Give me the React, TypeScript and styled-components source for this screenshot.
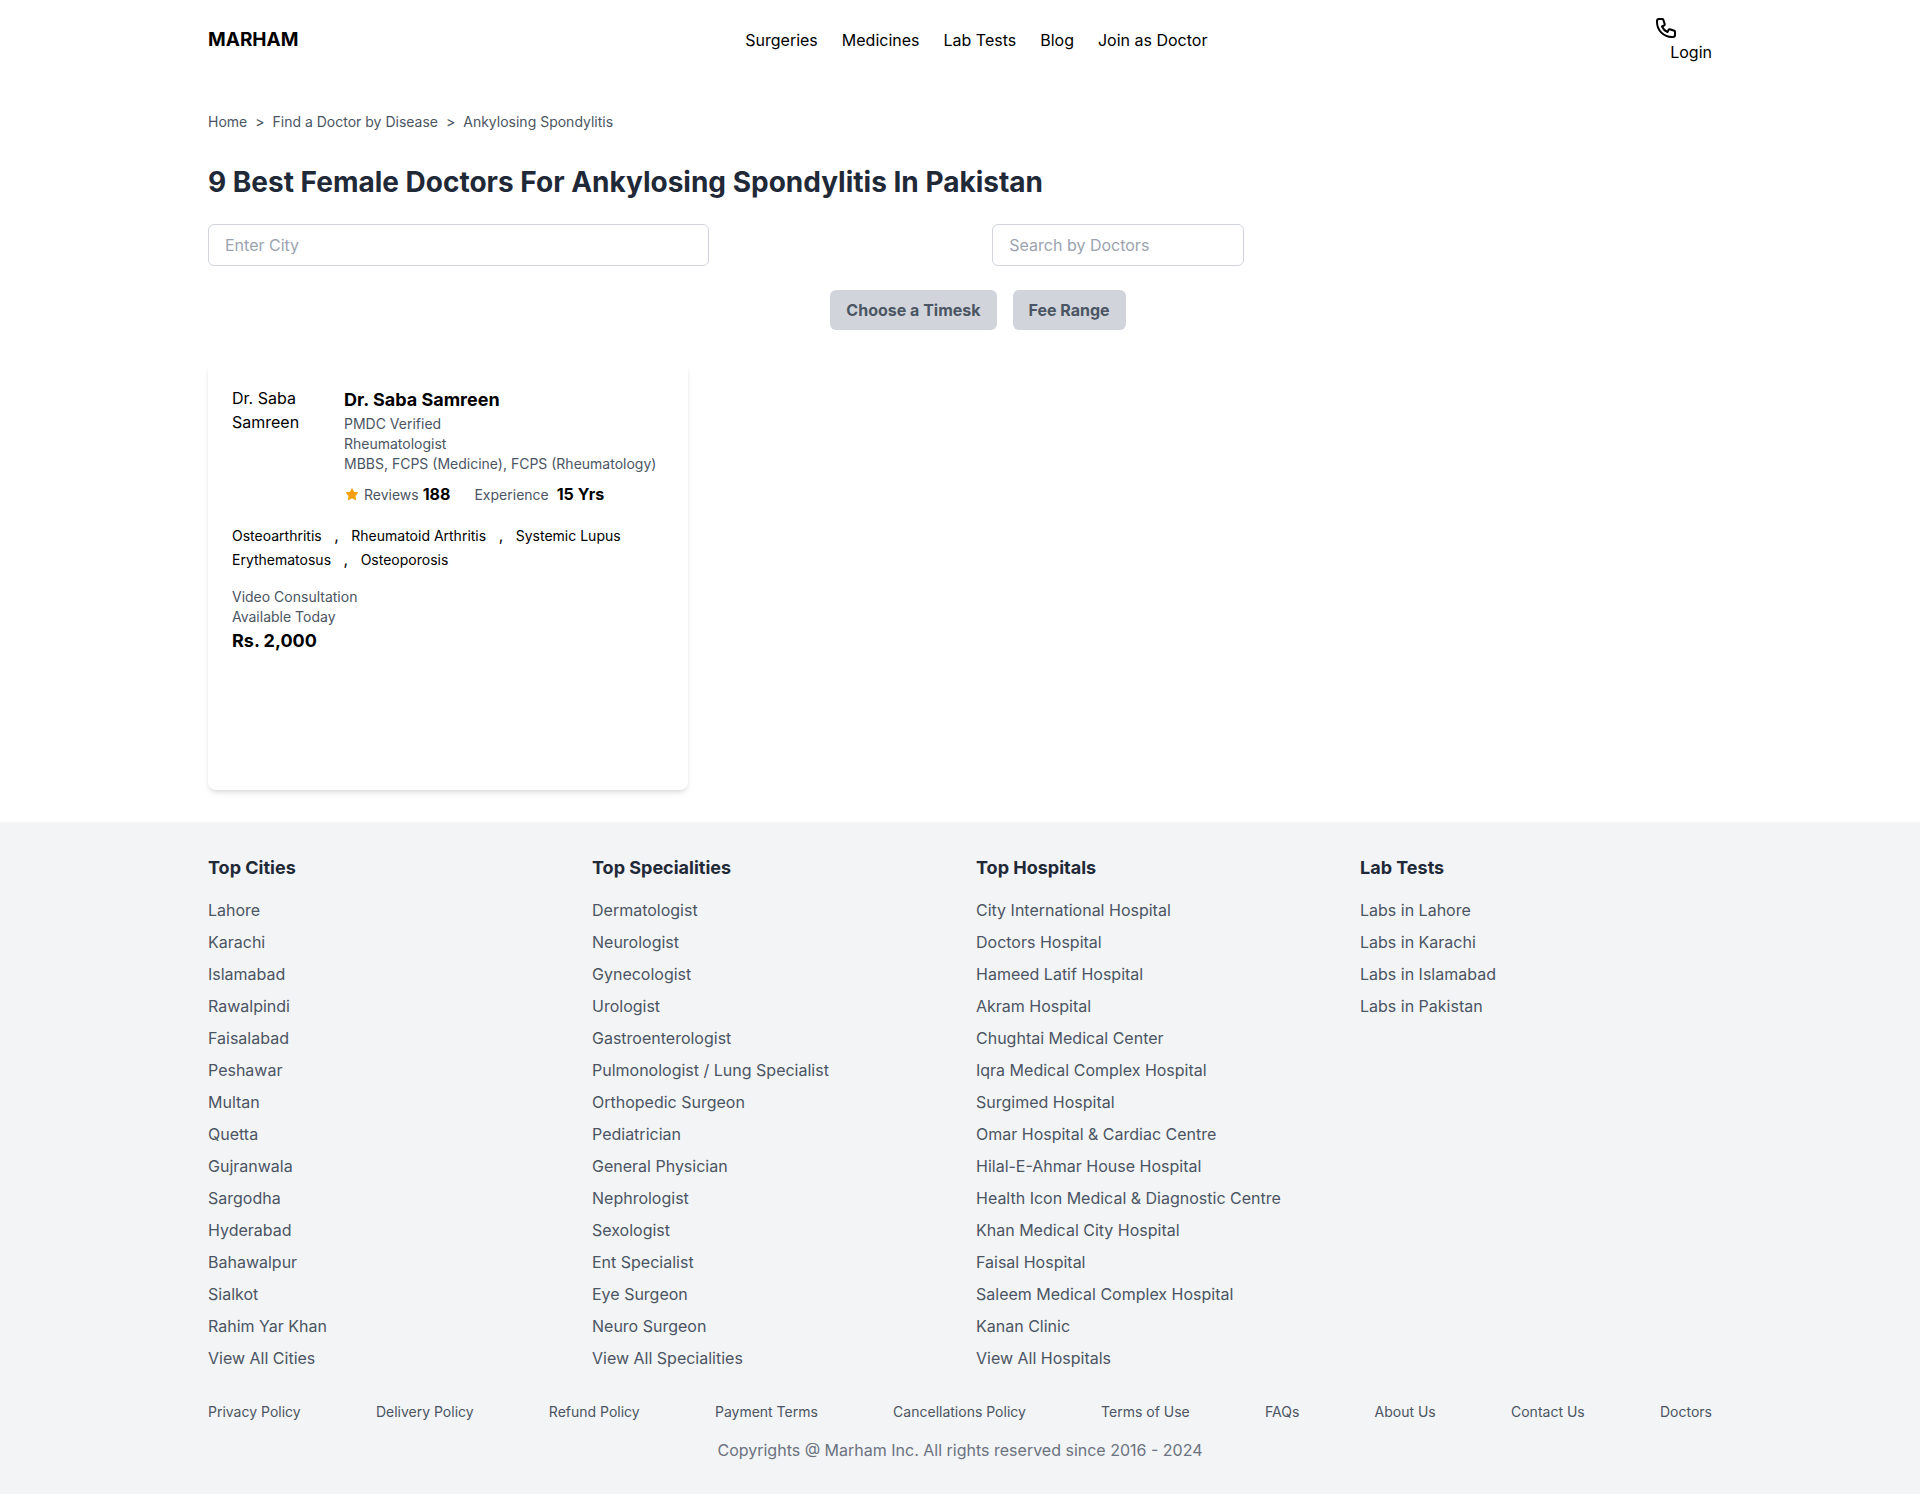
import React, { Fragment } from "react";
import styled, { createGlobalStyle } from "styled-components";

const color = {
  black: "#000000",
  heading: "#1f2937",
  body: "#4b5563",
  muted: "#6b7280",
  placeholder: "#9ca3af",
  border: "#d1d5db",
  panel: "#f3f4f6",
  star: "#f59e0b",
};

const GlobalStyle = createGlobalStyle`
  *, *::before, *::after { box-sizing: border-box; }
  body {
    margin: 0;
    background: #ffffff;
    color: ${color.black};
    font-family: Inter, "Liberation Sans", sans-serif;
    font-size: 16px;
    line-height: 24px;
  }
  h1, h2, h3, p, ul, ol { margin: 0; padding: 0; }
  ul, ol { list-style: none; }
  a { color: inherit; text-decoration: none; }
  input, button { font: inherit; }
`;

const Container = styled.div`
  max-width: 1536px;
  margin: 0 auto;
  padding: 0 16px;
`;

const Header = styled(Container).attrs({ as: "header" })`
  display: flex;
  align-items: center;
  justify-content: space-between;
  padding: 16px;
`;

const Brand = styled.a`
  font-size: 19px;
  line-height: 28px;
  font-weight: 700;
`;

const Nav = styled.nav`
  display: flex;
  flex-wrap: wrap;
  gap: 24px;
`;

const Account = styled.div`
  display: flex;
  flex-direction: column;
`;

const PhoneLink = styled.a`
  display: block;
  width: 24px;
  height: 24px;
`;

const PhoneIcon = styled.svg`
  display: block;
  width: 24px;
  height: 24px;
`;

const LoginLink = styled.a`
  margin-left: 16px;
`;

const Main = styled(Container).attrs({ as: "main" })`
  padding-top: 32px;
  padding-bottom: 32px;
`;

const Breadcrumb = styled.ol`
  display: flex;
  flex-wrap: wrap;
  gap: 8px;
  font-size: 14px;
  line-height: 20px;
  color: ${color.body};
`;

const Title = styled.h1`
  margin: 32px 0 24px;
  font-size: 28px;
  line-height: 36px;
  font-weight: 700;
  color: ${color.heading};
`;

const SearchRow = styled.form`
  display: flex;
`;

const Field = styled.input<{ $width: string }>`
  width: ${(p) => p.$width};
  height: 42px;
  padding: 8px 16px;
  border: 1px solid ${color.border};
  border-radius: 6px;
  background: #ffffff;
  &::placeholder {
    color: ${color.placeholder};
    opacity: 1;
  }
`;

const DoctorSearch = styled.div`
  flex: 1;
  padding-left: 283px;
`;

const Filters = styled.div`
  display: flex;
  justify-content: center;
  gap: 16px;
  margin: 24px 0 32px;
  padding-left: 36px;
`;

const FilterButton = styled.button`
  padding: 8px 16px;
  border: 0;
  border-radius: 6px;
  background: ${color.border};
  color: ${color.body};
  font-weight: 700;
`;

const Card = styled.article`
  width: 480px;
  max-width: 100%;
  min-height: 428px;
  padding: 24px;
  border-radius: 8px;
  background: #ffffff;
  box-shadow: 0 4px 6px -1px rgba(0, 0, 0, 0.1), 0 2px 4px -2px rgba(0, 0, 0, 0.1);
`;

const CardTop = styled.div`
  display: flex;
  gap: 16px;
`;

const Portrait = styled.div`
  flex: none;
  width: 96px;
  padding-right: 16px;
`;

const Strong = styled.h2`
  font-size: 18px;
  line-height: 28px;
  font-weight: 700;
`;

const Detail = styled.p`
  font-size: 14px;
  line-height: 20px;
  color: ${color.body};
`;

const Stats = styled.div`
  display: flex;
  align-items: center;
  gap: 24px;
  margin-top: 8px;
`;

const Stat = styled.div<{ $gap: number }>`
  display: flex;
  align-items: baseline;
  gap: ${(p) => p.$gap}px;
`;

const StatLabel = styled.span`
  font-size: 14px;
  color: ${color.body};
`;

const StatValue = styled.span`
  font-weight: 700;
`;

const StarIcon = styled.svg`
  width: 16px;
  height: 16px;
  align-self: center;
`;

const Conditions = styled.p`
  margin: 16px 0;
`;

const Condition = styled.span`
  font-size: 14px;
  line-height: 20px;
`;

const Separator = styled.span`
  margin: 0 8px;
`;

const Footer = styled.footer`
  padding: 32px 0;
  background: ${color.panel};
`;

const FooterGrid = styled.div`
  display: grid;
  grid-template-columns: repeat(4, minmax(0, 1fr));
  gap: 32px;
`;

const FooterHeading = styled.h3`
  margin-bottom: 16px;
  font-size: 18px;
  line-height: 28px;
  font-weight: 700;
  color: ${color.heading};
`;

const FooterList = styled.ul`
  display: grid;
  gap: 8px;
  color: ${color.body};
`;

const PolicyLinks = styled.nav`
  display: flex;
  flex-wrap: wrap;
  justify-content: space-between;
  margin: 32px 0 16px;
  font-size: 14px;
  line-height: 20px;
  color: ${color.body};
`;

const Copyright = styled.p`
  text-align: center;
  color: ${color.muted};
`;

const navItems = ["Surgeries", "Medicines", "Lab Tests", "Blog", "Join as Doctor"];
const conditions = [
  "Osteoarthritis",
  "Rheumatoid Arthritis",
  "Systemic Lupus Erythematosus",
  "Osteoporosis",
];
const policies = [
  "Privacy Policy",
  "Delivery Policy",
  "Refund Policy",
  "Payment Terms",
  "Cancellations Policy",
  "Terms of Use",
  "FAQs",
  "About Us",
  "Contact Us",
  "Doctors",
];
const footerColumns = [
  {
    title: "Top Cities",
    links: [
      "Lahore", "Karachi", "Islamabad", "Rawalpindi", "Faisalabad", "Peshawar", "Multan",
      "Quetta", "Gujranwala", "Sargodha", "Hyderabad", "Bahawalpur", "Sialkot",
      "Rahim Yar Khan", "View All Cities",
    ],
  },
  {
    title: "Top Specialities",
    links: [
      "Dermatologist", "Neurologist", "Gynecologist", "Urologist", "Gastroenterologist",
      "Pulmonologist / Lung Specialist", "Orthopedic Surgeon", "Pediatrician",
      "General Physician", "Nephrologist", "Sexologist", "Ent Specialist", "Eye Surgeon",
      "Neuro Surgeon", "View All Specialities",
    ],
  },
  {
    title: "Top Hospitals",
    links: [
      "City International Hospital", "Doctors Hospital", "Hameed Latif Hospital",
      "Akram Hospital", "Chughtai Medical Center", "Iqra Medical Complex Hospital",
      "Surgimed Hospital", "Omar Hospital & Cardiac Centre", "Hilal-E-Ahmar House Hospital",
      "Health Icon Medical & Diagnostic Centre", "Khan Medical City Hospital",
      "Faisal Hospital", "Saleem Medical Complex Hospital", "Kanan Clinic",
      "View All Hospitals",
    ],
  },
  {
    title: "Lab Tests",
    links: ["Labs in Lahore", "Labs in Karachi", "Labs in Islamabad", "Labs in Pakistan"],
  },
];

export default function App() {
  return (
    <>
      <GlobalStyle />
      <Header>
        <Brand href="#">MARHAM</Brand>
        <Nav aria-label="Main">
          {navItems.map((item) => (
            <a key={item} href="#">{item}</a>
          ))}
        </Nav>
        <Account>
          <PhoneLink href="#" aria-label="Call">
            <PhoneIcon viewBox="0 0 24 24" fill="none" stroke="currentColor" strokeWidth="2" strokeLinecap="round" strokeLinejoin="round">
              <path d="M3 5a2 2 0 012-2h3.28a1 1 0 01.948.684l1.498 4.493a1 1 0 01-.502 1.21l-2.257 1.13a11.042 11.042 0 005.516 5.516l1.13-2.257a1 1 0 011.21-.502l4.493 1.498a1 1 0 01.684.949V19a2 2 0 01-2 2h-1C9.716 21 3 14.284 3 6V5z" />
            </PhoneIcon>
          </PhoneLink>
          <LoginLink href="#">Login</LoginLink>
        </Account>
      </Header>

      <Main>
        <Breadcrumb>
          <li><a href="#">Home</a></li>
          <li aria-hidden="true">&gt;</li>
          <li><a href="#">Find a Doctor by Disease</a></li>
          <li aria-hidden="true">&gt;</li>
          <li>Ankylosing Spondylitis</li>
        </Breadcrumb>
        <Title>9 Best Female Doctors For Ankylosing Spondylitis In Pakistan</Title>

        <SearchRow>
          <Field $width="33.3333%" type="text" placeholder="Enter City" aria-label="Enter City" />
          <DoctorSearch>
            <Field $width="252px" type="text" placeholder="Search by Doctors" aria-label="Search by Doctors" />
          </DoctorSearch>
        </SearchRow>
        <Filters>
          <FilterButton type="button">Choose a Timesk</FilterButton>
          <FilterButton type="button">Fee Range</FilterButton>
        </Filters>

        <Card>
          <CardTop>
            <Portrait>Dr. Saba Samreen</Portrait>
            <div>
              <Strong>Dr. Saba Samreen</Strong>
              <Detail>PMDC Verified</Detail>
              <Detail>Rheumatologist</Detail>
              <Detail>MBBS, FCPS (Medicine), FCPS (Rheumatology)</Detail>
              <Stats>
                <Stat $gap={4}>
                  <StarIcon viewBox="0 0 16 16" fill={color.star} stroke={color.star} strokeWidth="1" strokeLinejoin="round">
                    <path d="M8 1.7L9.8 5.3L13.8 5.9L10.9 8.7L11.6 12.7L8 10.8L4.4 12.7L5.1 8.7L2.2 5.9L6.2 5.3Z" />
                  </StarIcon>
                  <StatLabel>Reviews</StatLabel>
                  <StatValue>188</StatValue>
                </Stat>
                <Stat $gap={8}>
                  <StatLabel>Experience</StatLabel>
                  <StatValue>15 Yrs</StatValue>
                </Stat>
              </Stats>
            </div>
          </CardTop>
          <Conditions>
            {conditions.map((name, i) => (
              <Fragment key={name}>
                {i > 0 && <> <Separator>,</Separator> </>}
                <Condition>{name}</Condition>
              </Fragment>
            ))}
          </Conditions>
          <Detail>Video Consultation</Detail>
          <Detail>Available Today</Detail>
          <Strong as="p">Rs. 2,000</Strong>
        </Card>
      </Main>

      <Footer>
        <Container>
          <FooterGrid>
            {footerColumns.map((column) => (
              <section key={column.title}>
                <FooterHeading>{column.title}</FooterHeading>
                <FooterList>
                  {column.links.map((link) => (
                    <li key={link}><a href="#">{link}</a></li>
                  ))}
                </FooterList>
              </section>
            ))}
          </FooterGrid>
          <PolicyLinks aria-label="Policies">
            {policies.map((policy) => (
              <a key={policy} href="#">{policy}</a>
            ))}
          </PolicyLinks>
          <Copyright>Copyrights @ Marham Inc. All rights reserved since 2016 - 2024</Copyright>
        </Container>
      </Footer>
    </>
  );
}
